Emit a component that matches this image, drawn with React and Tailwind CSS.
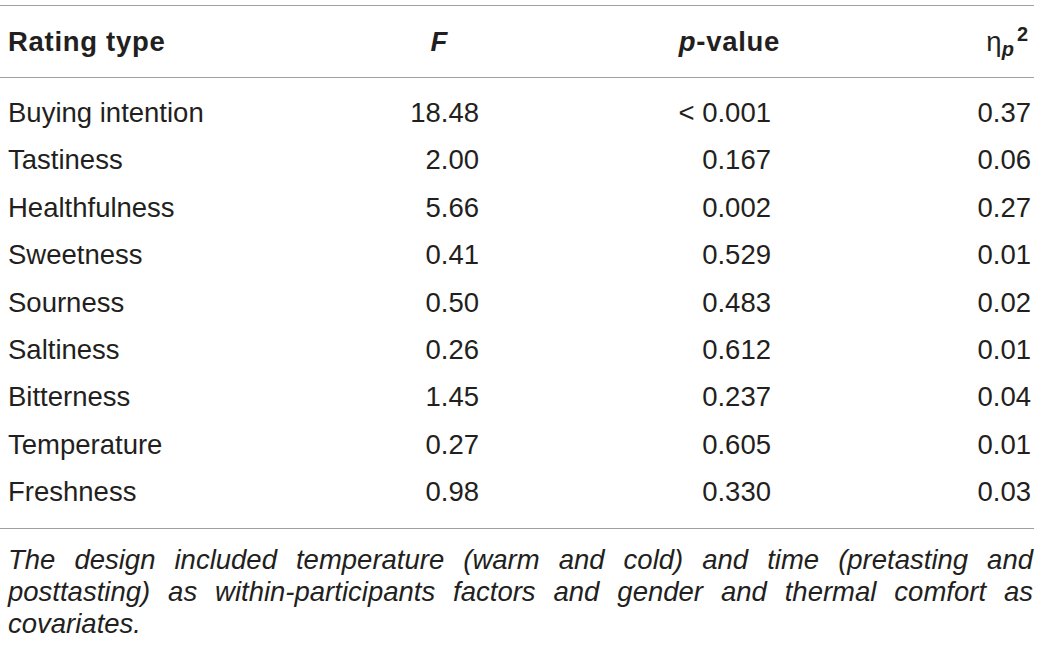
const rows = [
  ["Buying intention", "18.48", "< 0.001", "0.37"],
  ["Tastiness", "2.00", "0.167", "0.06"],
  ["Healthfulness", "5.66", "0.002", "0.27"],
  ["Sweetness", "0.41", "0.529", "0.01"],
  ["Sourness", "0.50", "0.483", "0.02"],
  ["Saltiness", "0.26", "0.612", "0.01"],
  ["Bitterness", "1.45", "0.237", "0.04"],
  ["Temperature", "0.27", "0.605", "0.01"],
  ["Freshness", "0.98", "0.330", "0.03"],
];

function App() {
  return (
    <div
      className="min-h-screen bg-white text-[#231f20] text-[27.5px]"
      style={{ fontFamily: '"Liberation Sans", Arial, sans-serif' }}
    >
      <div className="w-[1034px] pt-[5px]">
        {/* header */}
        <div className="border-t border-b border-[#a0a0a0] h-[73px] flex items-center pl-2 pr-[3px] font-bold tracking-[0.7px]">
          <div className="w-[331px]">Rating type</div>
          <div className="w-[140px] text-right pr-[31px] italic">F</div>
          <div className="w-[301px] text-right">
            <span className="italic">p</span>-value
          </div>
          <div className="flex-1 text-right pr-[3px] font-normal tracking-normal">
            η
            <sub className="italic font-bold text-[20px]">p</sub>
            <sup className="font-bold text-[20px] ml-[3px]">2</sup>
          </div>
        </div>

        {/* rows */}
        <div className="pt-[11px] pb-[12px] border-b border-[#a0a0a0]">
          {rows.map((r) => (
            <div key={r[0]} className="h-[47.4px] flex items-center pl-2 pr-[3px]">
              <div className="w-[331px]">{r[0]}</div>
              <div className="w-[140px] text-right">{r[1]}</div>
              <div className="w-[292px] text-right">{r[2]}</div>
              <div className="flex-1 text-right">{r[3]}</div>
            </div>
          ))}
        </div>

        {/* footnote */}
        <p className="pt-[15px] pl-2 pr-[1px] italic text-justify leading-[32px]">
          The design included temperature (warm and cold) and time (pretasting and posttasting) as
          within-participants factors and gender and thermal comfort as covariates.
        </p>
      </div>
    </div>
  );
}

export default App;
